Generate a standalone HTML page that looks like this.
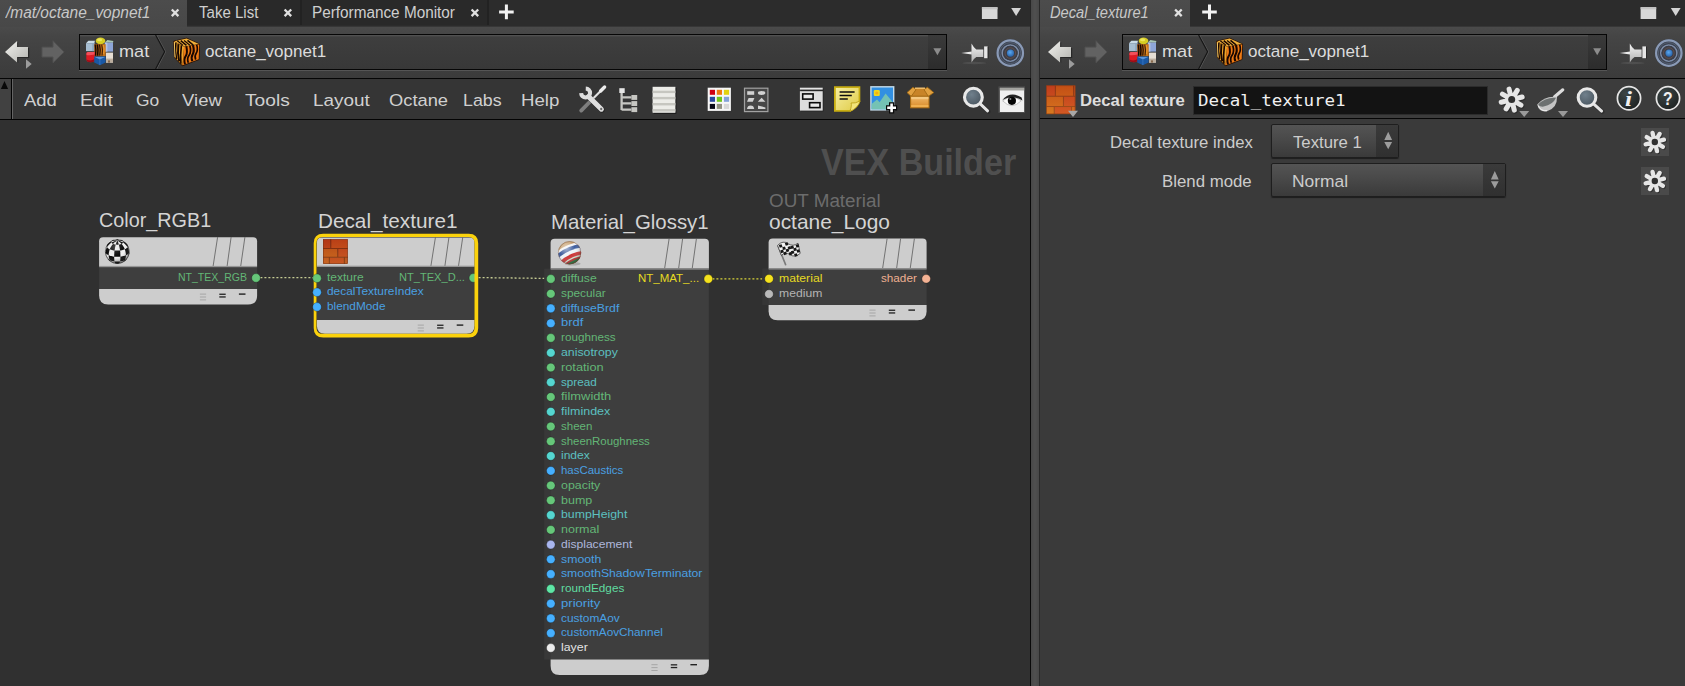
<!DOCTYPE html>
<html><head><meta charset="utf-8"><title>Houdini - VEX Builder</title>
<style>
html,body{margin:0;padding:0}
body{width:1685px;height:686px;overflow:hidden;position:relative;background:#303030;font-family:"Liberation Sans",sans-serif}
.a{position:absolute}
.t{position:absolute;white-space:pre;line-height:1;transform-origin:0 50%;font-family:"Liberation Sans",sans-serif}
svg{position:absolute;overflow:visible}
.tabbar{background:#2c2c2c;height:26px;top:0}
.tabon{background:linear-gradient(#4c4c4c,#484848);top:0;height:27px}
.taboff{background:#292929;top:0;height:25px;border-right:2px solid #222}
.toolbar{top:26px;height:52px;background:linear-gradient(#373737 0,#373737 1px,#4a4a4a 1px,#454545 20%,#3b3b3b 100%)}
.pathbox{top:34px;height:34px;border:1px solid #060606;background:linear-gradient(#565656 0,#3e3e3e 2px,#383838 100%);box-shadow:0 1px 0 #555}
.pathdd{top:35px;height:34px;width:18px;background:linear-gradient(#3a3a3a,#2c2c2c)}
.menubar{top:78px;height:40px;background:#353535;border-top:1px solid #050505;border-bottom:1px solid #030303;box-sizing:content-box}
.node-h{background:#cccccc}
.node-b{background:#3d3d3d}
.dot{position:absolute;width:8.6px;height:8.6px;border-radius:50%;margin:-4.3px 0 0 -4.3px}
.dd{border:1px solid #1e1e1e;border-radius:2px;background:linear-gradient(#545454,#494949 45%,#3a3a3a);box-shadow:0 1px 1px rgba(0,0,0,.5)}
.ddr{position:absolute;right:0;top:0;bottom:0;width:22px;background:linear-gradient(#3a3a3a,#303030)}

</style></head>
<body>
<!-- ============ LEFT PANE ============ -->
<div class="a toolbar" style="left:0;width:1030px"></div>
<div class="a tabbar" style="left:0;width:1030px"></div>
<div class="a tabon" style="left:0;width:187px"></div>
<div class="a taboff" style="left:187px;width:113px"></div>
<div class="a taboff" style="left:302px;width:185px"></div>
<div class="a pathbox" style="left:79px;width:866px"></div>
<div class="a pathdd" style="left:928px"></div>
<div class="a menubar" style="left:0;width:1030px"></div>
<div class="a" style="left:0;top:79px;width:11px;height:40px;background:#414141;border-right:1px solid #020202"></div>
<div class="a" style="left:12px;top:79px;width:1px;height:40px;background:#646464"></div>
<div class="a" style="left:1030px;top:0;width:1px;height:686px;background:#0a0a0a"></div>
<div class="a" style="left:1030px;top:0;width:1px;height:78px;background:#262626"></div>
<!-- divider -->
<div class="a" style="left:1031px;top:0;width:8px;height:686px;background:linear-gradient(90deg,#484848,#505050 50%,#484848)"></div>
<div class="a" style="left:1039px;top:0;width:1px;height:686px;background:#2a2a2a"></div>
<!-- ============ RIGHT PANE ============ -->
<div class="a" style="left:1040px;top:0;width:645px;height:686px;background:#3a3a3a"></div>
<div class="a toolbar" style="left:1040px;width:645px"></div>
<div class="a tabbar" style="left:1040px;width:645px"></div>
<div class="a tabon" style="left:1040px;width:150px"></div>
<div class="a pathbox" style="left:1122px;width:483px"></div>
<div class="a pathdd" style="left:1588px"></div>
<div class="a" style="left:1040px;top:78px;width:645px;height:1px;background:#050505"></div>
<div class="a" style="left:1040px;top:79px;width:645px;height:39px;background:#3c3c3c"></div>
<div class="a" style="left:1040px;top:118px;width:645px;height:1px;background:#050505"></div>
<div class="a" style="left:1193px;top:86px;width:293px;height:27px;background:#131313;border:1px solid #2c2c2c"></div>
<!-- dropdowns -->
<div class="a dd" style="left:1271px;top:124px;width:126px;height:32px"><div class="ddr"></div></div>
<div class="a dd" style="left:1271px;top:163px;width:233px;height:32px"><div class="ddr"></div></div>
<div class="a" style="left:1641px;top:128px;width:28px;height:28px;background:#4a4a4a"></div>
<div class="a" style="left:1641px;top:167px;width:28px;height:28px;background:#4a4a4a"></div>

<svg width="1685" height="686" viewBox="0 0 1685 686" style="left:0;top:0">
<line x1="260.4" y1="277.6" x2="313.4" y2="277.6" stroke="#c6cc94" stroke-width="1.3" stroke-dasharray="2 2"/>
<line x1="478.6" y1="277.6" x2="547" y2="278.4" stroke="#c6cc94" stroke-width="1.3" stroke-dasharray="2 2"/>
<line x1="712.4" y1="278.9" x2="765" y2="278.9" stroke="#d6d23a" stroke-width="1.3" stroke-dasharray="2 2"/>
<path d="M99.1,266.2 V241.2 Q99.1,237.2 103.1,237.2 H253.10000000000002 Q257.1,237.2 257.1,241.2 V266.2 Z" fill="#cdcdcd"/>
<line x1="217.6" y1="237.2" x2="213.1" y2="266.2" stroke="#4a4a4a" stroke-width="0.7"/>
<line x1="231.1" y1="237.2" x2="227.1" y2="266.2" stroke="#4a4a4a" stroke-width="0.7"/>
<line x1="244.9" y1="237.2" x2="240.7" y2="266.2" stroke="#4a4a4a" stroke-width="0.7"/>
<rect x="99.1" y="266.2" width="158" height="22.8" fill="#3e3e3e"/>
<rect x="99.1" y="265.9" width="158" height="1.3" fill="#969696"/>
<path d="M99.1,289.0 H257.1 V295.6 Q257.1,304.6 248.10000000000002,304.6 H108.1 Q99.1,304.6 99.1,295.6 Z" fill="#cdcdcd"/>
<rect x="199.9" y="293.6" width="6.2" height="1" fill="#a6a6a6"/>
<rect x="199.9" y="296.5" width="6.2" height="1" fill="#a6a6a6"/>
<rect x="199.9" y="299.4" width="6.2" height="1" fill="#a6a6a6"/>
<rect x="219.3" y="293.6" width="6.4" height="1.3" fill="#222"/>
<rect x="219.3" y="296.3" width="6.4" height="1.3" fill="#222"/>
<rect x="238.9" y="293.4" width="6.6" height="1.4" fill="#222"/>
<rect x="315" y="235" width="161" height="100.5" rx="7" ry="7" fill="#2a2a2a"/>
<path d="M316.9,266.0 V242.6 Q316.9,237.6 321.9,237.6 H469.5 Q474.5,237.6 474.5,242.6 V266.0 Z" fill="#cdcdcd"/>
<line x1="435.4" y1="237.6" x2="430.9" y2="266.0" stroke="#4a4a4a" stroke-width="0.7"/>
<line x1="448.9" y1="237.6" x2="444.9" y2="266.0" stroke="#4a4a4a" stroke-width="0.7"/>
<line x1="462.7" y1="237.6" x2="458.5" y2="266.0" stroke="#4a4a4a" stroke-width="0.7"/>
<rect x="316.9" y="266.0" width="157.6" height="54.0" fill="#3e3e3e"/>
<rect x="316.9" y="265.7" width="157.6" height="1.3" fill="#969696"/>
<path d="M316.9,320.0 H474.5 V325.8 Q474.5,333.8 466.5,333.8 H324.9 Q316.9,333.8 316.9,325.8 Z" fill="#cdcdcd"/>
<rect x="417.7" y="324.6" width="6.2" height="1" fill="#a6a6a6"/>
<rect x="417.7" y="327.5" width="6.2" height="1" fill="#a6a6a6"/>
<rect x="417.7" y="330.4" width="6.2" height="1" fill="#a6a6a6"/>
<rect x="437.1" y="324.6" width="6.4" height="1.3" fill="#222"/>
<rect x="437.1" y="327.3" width="6.4" height="1.3" fill="#222"/>
<rect x="456.7" y="324.4" width="6.6" height="1.4" fill="#222"/>
<rect x="544.2" y="268.6" width="7" height="391" fill="#383838"/>
<path d="M550.6,268.6 V242.8 Q550.6,238.8 554.6,238.8 H704.9000000000001 Q708.9000000000001,238.8 708.9000000000001,242.8 V268.6 Z" fill="#cdcdcd"/>
<line x1="669.1" y1="238.8" x2="664.6" y2="268.6" stroke="#4a4a4a" stroke-width="0.7"/>
<line x1="682.6" y1="238.8" x2="678.6" y2="268.6" stroke="#4a4a4a" stroke-width="0.7"/>
<line x1="696.4" y1="238.8" x2="692.2" y2="268.6" stroke="#4a4a4a" stroke-width="0.7"/>
<rect x="550.6" y="268.6" width="158.3" height="391.0" fill="#3e3e3e"/>
<rect x="550.6" y="268.3" width="158.3" height="1.3" fill="#969696"/>
<path d="M550.6,659.6 H708.9000000000001 V666.1 Q708.9000000000001,675.1 699.9000000000001,675.1 H559.6 Q550.6,675.1 550.6,666.1 Z" fill="#cdcdcd"/>
<rect x="651.4" y="664.2" width="6.2" height="1" fill="#a6a6a6"/>
<rect x="651.4" y="667.1" width="6.2" height="1" fill="#a6a6a6"/>
<rect x="651.4" y="670.0" width="6.2" height="1" fill="#a6a6a6"/>
<rect x="670.8" y="664.2" width="6.4" height="1.3" fill="#222"/>
<rect x="670.8" y="666.9" width="6.4" height="1.3" fill="#222"/>
<rect x="690.4" y="664.0" width="6.6" height="1.4" fill="#222"/>
<rect x="762.2" y="268.5" width="7" height="36.5" fill="#363636"/>
<path d="M768.6,268.5 V242.6 Q768.6,238.6 772.6,238.6 H922.6 Q926.6,238.6 926.6,242.6 V268.5 Z" fill="#cdcdcd"/>
<line x1="887.1" y1="238.6" x2="882.6" y2="268.5" stroke="#4a4a4a" stroke-width="0.7"/>
<line x1="900.6" y1="238.6" x2="896.6" y2="268.5" stroke="#4a4a4a" stroke-width="0.7"/>
<line x1="914.4" y1="238.6" x2="910.2" y2="268.5" stroke="#4a4a4a" stroke-width="0.7"/>
<rect x="768.6" y="268.5" width="158" height="36.5" fill="#3e3e3e"/>
<rect x="768.6" y="268.2" width="158" height="1.3" fill="#969696"/>
<path d="M768.6,305.0 H926.6 V311.3 Q926.6,320.3 917.6,320.3 H777.6 Q768.6,320.3 768.6,311.3 Z" fill="#cdcdcd"/>
<rect x="869.4" y="309.6" width="6.2" height="1" fill="#a6a6a6"/>
<rect x="869.4" y="312.5" width="6.2" height="1" fill="#a6a6a6"/>
<rect x="869.4" y="315.4" width="6.2" height="1" fill="#a6a6a6"/>
<rect x="888.8" y="309.6" width="6.4" height="1.3" fill="#222"/>
<rect x="888.8" y="312.3" width="6.4" height="1.3" fill="#222"/>
<rect x="908.4" y="309.4" width="6.6" height="1.4" fill="#222"/>
<circle cx="256.0" cy="277.9" r="4.3" fill="#66c77a" stroke="#000" stroke-opacity="0.28" stroke-width="0.9"/>
<circle cx="473.4" cy="277.9" r="4.3" fill="#66c77a" stroke="#000" stroke-opacity="0.28" stroke-width="0.9"/>
<path fill-rule="evenodd" fill="#fbd20c" d="M323.2,233.7 H468.7 Q478.2,233.7 478.2,243.2 V327.9 Q478.2,337.4 468.7,337.4 H323.2 Q313.7,337.4 313.7,327.9 V243.2 Q313.7,233.7 323.2,233.7Z M322.5,236.9 H468.5 Q474.5,236.9 474.5,242.9 V327.8 Q474.5,333.8 468.5,333.8 H322.5 Q316.5,333.8 316.5,327.8 V242.9 Q316.5,236.9 322.5,236.9Z"/>
<circle cx="317.0" cy="278.2" r="4.3" fill="#66c77a" stroke="#000" stroke-opacity="0.28" stroke-width="0.9"/>
<circle cx="317.0" cy="292.2" r="4.3" fill="#46b0ff" stroke="#000" stroke-opacity="0.28" stroke-width="0.9"/>
<circle cx="317.0" cy="306.9" r="4.3" fill="#46b0ff" stroke="#000" stroke-opacity="0.28" stroke-width="0.9"/>
<circle cx="550.8" cy="278.9" r="4.3" fill="#66c77a" stroke="#000" stroke-opacity="0.28" stroke-width="0.9"/>
<circle cx="550.8" cy="293.7" r="4.3" fill="#66c77a" stroke="#000" stroke-opacity="0.28" stroke-width="0.9"/>
<circle cx="550.8" cy="308.4" r="4.3" fill="#46b0ff" stroke="#000" stroke-opacity="0.28" stroke-width="0.9"/>
<circle cx="550.8" cy="323.2" r="4.3" fill="#46b0ff" stroke="#000" stroke-opacity="0.28" stroke-width="0.9"/>
<circle cx="550.8" cy="337.9" r="4.3" fill="#66c77a" stroke="#000" stroke-opacity="0.28" stroke-width="0.9"/>
<circle cx="550.8" cy="352.7" r="4.3" fill="#55d6d0" stroke="#000" stroke-opacity="0.28" stroke-width="0.9"/>
<circle cx="550.8" cy="367.5" r="4.3" fill="#66c77a" stroke="#000" stroke-opacity="0.28" stroke-width="0.9"/>
<circle cx="550.8" cy="382.2" r="4.3" fill="#55d6d0" stroke="#000" stroke-opacity="0.28" stroke-width="0.9"/>
<circle cx="550.8" cy="397.0" r="4.3" fill="#66c77a" stroke="#000" stroke-opacity="0.28" stroke-width="0.9"/>
<circle cx="550.8" cy="411.7" r="4.3" fill="#55d6d0" stroke="#000" stroke-opacity="0.28" stroke-width="0.9"/>
<circle cx="550.8" cy="426.5" r="4.3" fill="#66c77a" stroke="#000" stroke-opacity="0.28" stroke-width="0.9"/>
<circle cx="550.8" cy="441.3" r="4.3" fill="#66c77a" stroke="#000" stroke-opacity="0.28" stroke-width="0.9"/>
<circle cx="550.8" cy="456.0" r="4.3" fill="#55d6d0" stroke="#000" stroke-opacity="0.28" stroke-width="0.9"/>
<circle cx="550.8" cy="470.8" r="4.3" fill="#46b0ff" stroke="#000" stroke-opacity="0.28" stroke-width="0.9"/>
<circle cx="550.8" cy="485.5" r="4.3" fill="#66c77a" stroke="#000" stroke-opacity="0.28" stroke-width="0.9"/>
<circle cx="550.8" cy="500.3" r="4.3" fill="#66c77a" stroke="#000" stroke-opacity="0.28" stroke-width="0.9"/>
<circle cx="550.8" cy="515.1" r="4.3" fill="#55d6d0" stroke="#000" stroke-opacity="0.28" stroke-width="0.9"/>
<circle cx="550.8" cy="529.8" r="4.3" fill="#66c77a" stroke="#000" stroke-opacity="0.28" stroke-width="0.9"/>
<circle cx="550.8" cy="544.6" r="4.3" fill="#a9b6ee" stroke="#000" stroke-opacity="0.28" stroke-width="0.9"/>
<circle cx="550.8" cy="559.3" r="4.3" fill="#46b0ff" stroke="#000" stroke-opacity="0.28" stroke-width="0.9"/>
<circle cx="550.8" cy="574.1" r="4.3" fill="#46b0ff" stroke="#000" stroke-opacity="0.28" stroke-width="0.9"/>
<circle cx="550.8" cy="588.9" r="4.3" fill="#5fe6a6" stroke="#000" stroke-opacity="0.28" stroke-width="0.9"/>
<circle cx="550.8" cy="603.6" r="4.3" fill="#46b0ff" stroke="#000" stroke-opacity="0.28" stroke-width="0.9"/>
<circle cx="550.8" cy="618.4" r="4.3" fill="#46b0ff" stroke="#000" stroke-opacity="0.28" stroke-width="0.9"/>
<circle cx="550.8" cy="633.1" r="4.3" fill="#46b0ff" stroke="#000" stroke-opacity="0.28" stroke-width="0.9"/>
<circle cx="550.8" cy="647.9" r="4.3" fill="#ececec" stroke="#000" stroke-opacity="0.28" stroke-width="0.9"/>
<circle cx="708.3" cy="278.9" r="4.3" fill="#f5e21e" stroke="#000" stroke-opacity="0.28" stroke-width="0.9"/>
<circle cx="769.0" cy="278.8" r="4.3" fill="#f5e21e" stroke="#000" stroke-opacity="0.28" stroke-width="0.9"/>
<circle cx="769.0" cy="294.0" r="4.3" fill="#b9b9b9" stroke="#000" stroke-opacity="0.28" stroke-width="0.9"/>
<circle cx="926.2" cy="278.8" r="4.3" fill="#f4b294" stroke="#000" stroke-opacity="0.28" stroke-width="0.9"/>
</svg>
<svg width="1685" height="686" viewBox="0 0 1685 686" style="left:0;top:0">
<defs>
<linearGradient id="gArrow" x1="0" y1="0" x2="1" y2="1"><stop offset="0" stop-color="#f2f2ee"/><stop offset="1" stop-color="#b4b4b0"/></linearGradient>
<linearGradient id="gPin" x1="0" y1="0" x2="0" y2="1"><stop offset="0" stop-color="#f4f4f4"/><stop offset="1" stop-color="#b0b0b0"/></linearGradient>
<radialGradient id="gBlue" cx="0.45" cy="0.4" r="0.6"><stop offset="0" stop-color="#5aa8f0"/><stop offset="1" stop-color="#2a62a8"/></radialGradient>
<radialGradient id="gLens" cx="0.4" cy="0.35" r="0.7"><stop offset="0" stop-color="#70808c"/><stop offset="1" stop-color="#48545e"/></radialGradient>
<radialGradient id="gInfo" cx="0.35" cy="0.3" r="0.8"><stop offset="0" stop-color="#3c4646"/><stop offset="1" stop-color="#1c2020"/></radialGradient>
<radialGradient id="gBall" cx="0.38" cy="0.3" r="0.75"><stop offset="0" stop-color="#ffffff"/><stop offset="0.6" stop-color="#d8d8d8"/><stop offset="1" stop-color="#8a8a8a"/></radialGradient>
<linearGradient id="gBrick" x1="0" y1="0" x2="0" y2="1"><stop offset="0" stop-color="#c85a20"/><stop offset="1" stop-color="#d86a1c"/></linearGradient>
<linearGradient id="gBox" x1="0" y1="0" x2="0" y2="1"><stop offset="0" stop-color="#f0b868"/><stop offset="1" stop-color="#d88a28"/></linearGradient>
<linearGradient id="gNote" x1="0" y1="0" x2="1" y2="1"><stop offset="0" stop-color="#f6eea0"/><stop offset="1" stop-color="#e0cc48"/></linearGradient>
<linearGradient id="gBrickOv" x1="0" y1="0" x2="0" y2="1"><stop offset="0" stop-color="#a01818" stop-opacity="0.22"/><stop offset="1" stop-color="#ffb040" stop-opacity="0.22"/></linearGradient>
<clipPath id="cBall"><circle cx="0" cy="0" r="12"/></clipPath>
<clipPath id="cBall2"><circle cx="0" cy="0" r="11.5"/></clipPath>
<radialGradient id="gShade" cx="0.36" cy="0.3" r="0.8"><stop offset="0" stop-color="#ffffff" stop-opacity="0.55"/><stop offset="0.45" stop-color="#ffffff" stop-opacity="0"/><stop offset="1" stop-color="#000000" stop-opacity="0.45"/></radialGradient><radialGradient id="gShade2" cx="0.4" cy="0.32" r="0.75"><stop offset="0" stop-color="#ffffff" stop-opacity="0.25"/><stop offset="0.55" stop-color="#808080" stop-opacity="0"/><stop offset="1" stop-color="#000000" stop-opacity="0.6"/></radialGradient></defs>
<path d="M6.2,53.1 L18.2,42 V48.1 H29.2 V57.9 H18.2 V63 Z" fill="#222" opacity="0.8"/><path d="M5,52.1 L17.1,41 V47.1 H28 V56.9 H17.1 V62.4 Z" fill="url(#gArrow)"/><path d="M26,59.2 L31.7,64 L26,68.8 Z" fill="#9c9c9c"/>
<path d="M64.1,52 L53,40.7 V47.1 H42 V57 H53 V62.8 Z" fill="#626262" stroke="#505050" stroke-width="1"/>
<path d="M86,43.2 L88.4,40.8 H94.9 L94.4,43.2 Z" fill="#c8dae6"/><rect x="86" y="43.2" width="8.4" height="7.9" fill="#a6bed2"/><rect x="92.2" y="43.2" width="2.2" height="7.9" fill="#8ea8c0"/><ellipse cx="100.5" cy="40.9" rx="4.8" ry="3.4" fill="#d6cc22"/><ellipse cx="99.6" cy="39.8" rx="2.6" ry="1.5" fill="#ece65a"/><path d="M104.8,42.6 L107.4,40 L113.4,41 L112.9,42.8 Z" fill="#a8c6b4"/><rect x="104.8" y="42.6" width="8.2" height="9" fill="#8ea6d8"/><rect x="104.8" y="42.6" width="2.6" height="9" fill="#b4c4e4"/><rect x="94.5" y="44.2" width="11.2" height="11.8" fill="#c8741a"/><rect x="94.5" y="44.2" width="5" height="11.8" fill="#8a4a12"/><path d="M95.2,44.6 q1.2,5.5 0.2,11" stroke="#180800" stroke-width="1.2" fill="none"/><path d="M97.3,44.6 q1.2,5.5 0.2,11" stroke="#180800" stroke-width="1.3" fill="none"/><path d="M99.6,44.6 q1.2,5.5 0.2,11" stroke="#180800" stroke-width="1.1" fill="none"/><path d="M101.8,44.6 q1.2,5.5 0.2,11" stroke="#180800" stroke-width="0.9" fill="none"/><path d="M103.2,45 q1.6,4 0.4,9" stroke="#e89830" stroke-width="1.2" fill="none"/><path d="M86.3,53.4 Q86.3,51.9 88,51.9 H94.7 V61 Q91,63.4 87.4,61.6 Q86.3,60.6 86.3,59 Z" fill="#dc1a24"/><path d="M86.5,53.6 Q86.5,52.1 88,52.1 H94.5 V54.4 Q90,55.6 86.5,55 Z" fill="#f2505a"/><path d="M86.6,59.4 Q90.5,61.6 94.7,59 V61 Q91,63.4 87.4,61.6 Z" fill="#9a0e18"/><path d="M94.2,56.8 H105.6 V62.6 L99.9,65.2 L94.2,62.6 Z" fill="#1a58a4"/><path d="M94.2,56.8 H105.6 L99.9,59.6 Z" fill="#5a96dc"/><path d="M99.9,59.6 V65" stroke="#3a78c4" stroke-width="0.8"/><rect x="106" y="52.6" width="7" height="10" fill="#e6ded4"/><rect x="106" y="58.6" width="7" height="4" fill="#bcae9e"/><rect x="108.2" y="60.4" width="1.6" height="2.2" fill="#7a5a3a"/>
<path d="M156.6,35 L165.6,51.8 L156.6,69" fill="none" stroke="#5a5a5a" stroke-width="1"/><path d="M155.6,35 L164.6,51.8 L155.6,69" fill="none" stroke="#161616" stroke-width="1.2"/>
<path d="M173.6,41.2 L186.7,38.2 L199.5,44.1 L199,59.5 L182.4,65.8 L174.5,57.6 Z" fill="#2a1204" stroke="#2a1204" stroke-width="0.9" stroke-linejoin="round"/><path d="M173.9,41.6 L184.1,46.7 L182.5,65.3 L174.8,57.4 Z" fill="#eca42a"/><path d="M184.1,46.7 L199.2,44.4 L198.7,59.3 L182.5,65.3 Z" fill="#ee7a14"/><path d="M174.2,41.3 L186.7,38.5 L199,44.1 L184.1,46.4 Z" fill="#f0b03a"/><path d="M186.3,46.3 Q187.9,53.2 185.7,56.2 T185.0,64.2" stroke="#180600" stroke-width="2.0" fill="none"/><path d="M189.9,45.8 Q191.5,52.2 189.1,55.2 T188.3,62.7" stroke="#180600" stroke-width="1.7" fill="none"/><path d="M193.0,45.3 Q194.6,51.2 192.7,54.2 T192.4,61.2" stroke="#180600" stroke-width="2.1" fill="none"/><path d="M196.7,44.8 Q198.29999999999998,50.2 196.2,53.2 T195.7,59.7" stroke="#180600" stroke-width="1.6" fill="none"/><path d="M175.9,42.8 Q174.70000000000002,50.9 176.6,59.0" stroke="#180600" stroke-width="1.5" fill="none"/><path d="M178.4,44.1 Q177.20000000000002,52.8 179.2,61.4" stroke="#180600" stroke-width="1.9" fill="none"/><path d="M181.4,45.4 Q180.20000000000002,54.6 180.9,63.8" stroke="#180600" stroke-width="1.6" fill="none"/><path d="M177.3,40.7 l5.8,4.7" stroke="#180600" stroke-width="1.2"/><path d="M180.70000000000002,40.6 l5.8,4.7" stroke="#180600" stroke-width="1.5"/><path d="M184.10000000000002,40.5 l5.8,4.7" stroke="#180600" stroke-width="1.2"/><path d="M187.5,40.4 l5.8,4.7" stroke="#180600" stroke-width="1.5"/><path d="M174.3,42.2 L175,57" stroke="#f6d070" stroke-width="0.9" opacity="0.9"/>
<path d="M1049.2,53.1 L1061.2,42 V48.1 H1072.2 V57.9 H1061.2 V63 Z" fill="#222" opacity="0.8"/><path d="M1048,52.1 L1060.1,41 V47.1 H1071 V56.9 H1060.1 V62.4 Z" fill="url(#gArrow)"/><path d="M1069,59.2 L1074.7,64 L1069,68.8 Z" fill="#9c9c9c"/>
<path d="M1107.1,52 L1096,40.7 V47.1 H1085 V57 H1096 V62.8 Z" fill="#626262" stroke="#505050" stroke-width="1"/>
<path d="M1129,43.2 L1131.4,40.8 H1137.9 L1137.4,43.2 Z" fill="#c8dae6"/><rect x="1129" y="43.2" width="8.4" height="7.9" fill="#a6bed2"/><rect x="1135.2" y="43.2" width="2.2" height="7.9" fill="#8ea8c0"/><ellipse cx="1143.5" cy="40.9" rx="4.8" ry="3.4" fill="#d6cc22"/><ellipse cx="1142.6" cy="39.8" rx="2.6" ry="1.5" fill="#ece65a"/><path d="M1147.8,42.6 L1150.4,40 L1156.4,41 L1155.9,42.8 Z" fill="#a8c6b4"/><rect x="1147.8" y="42.6" width="8.2" height="9" fill="#8ea6d8"/><rect x="1147.8" y="42.6" width="2.6" height="9" fill="#b4c4e4"/><rect x="1137.5" y="44.2" width="11.2" height="11.8" fill="#c8741a"/><rect x="1137.5" y="44.2" width="5" height="11.8" fill="#8a4a12"/><path d="M1138.2,44.6 q1.2,5.5 0.2,11" stroke="#180800" stroke-width="1.2" fill="none"/><path d="M1140.3,44.6 q1.2,5.5 0.2,11" stroke="#180800" stroke-width="1.3" fill="none"/><path d="M1142.6,44.6 q1.2,5.5 0.2,11" stroke="#180800" stroke-width="1.1" fill="none"/><path d="M1144.8,44.6 q1.2,5.5 0.2,11" stroke="#180800" stroke-width="0.9" fill="none"/><path d="M1146.2,45 q1.6,4 0.4,9" stroke="#e89830" stroke-width="1.2" fill="none"/><path d="M1129.3,53.4 Q1129.3,51.9 1131,51.9 H1137.7 V61 Q1134,63.4 1130.4,61.6 Q1129.3,60.6 1129.3,59 Z" fill="#dc1a24"/><path d="M1129.5,53.6 Q1129.5,52.1 1131,52.1 H1137.5 V54.4 Q1133,55.6 1129.5,55 Z" fill="#f2505a"/><path d="M1129.6,59.4 Q1133.5,61.6 1137.7,59 V61 Q1134,63.4 1130.4,61.6 Z" fill="#9a0e18"/><path d="M1137.2,56.8 H1148.6 V62.6 L1142.9,65.2 L1137.2,62.6 Z" fill="#1a58a4"/><path d="M1137.2,56.8 H1148.6 L1142.9,59.6 Z" fill="#5a96dc"/><path d="M1142.9,59.6 V65" stroke="#3a78c4" stroke-width="0.8"/><rect x="1149" y="52.6" width="7" height="10" fill="#e6ded4"/><rect x="1149" y="58.6" width="7" height="4" fill="#bcae9e"/><rect x="1151.2" y="60.4" width="1.6" height="2.2" fill="#7a5a3a"/>
<path d="M1199.6,35 L1208.6,51.8 L1199.6,69" fill="none" stroke="#5a5a5a" stroke-width="1"/><path d="M1198.6,35 L1207.6,51.8 L1198.6,69" fill="none" stroke="#161616" stroke-width="1.2"/>
<path d="M1216.6,41.2 L1229.7,38.2 L1242.5,44.1 L1242,59.5 L1225.4,65.8 L1217.5,57.6 Z" fill="#2a1204" stroke="#2a1204" stroke-width="0.9" stroke-linejoin="round"/><path d="M1216.9,41.6 L1227.1,46.7 L1225.5,65.3 L1217.8,57.4 Z" fill="#eca42a"/><path d="M1227.1,46.7 L1242.2,44.4 L1241.7,59.3 L1225.5,65.3 Z" fill="#ee7a14"/><path d="M1217.2,41.3 L1229.7,38.5 L1242,44.1 L1227.1,46.4 Z" fill="#f0b03a"/><path d="M1229.3,46.3 Q1230.8999999999999,53.2 1228.7,56.2 T1228.0,64.2" stroke="#180600" stroke-width="2.0" fill="none"/><path d="M1232.9,45.8 Q1234.5,52.2 1232.1,55.2 T1231.3,62.7" stroke="#180600" stroke-width="1.7" fill="none"/><path d="M1236.0,45.3 Q1237.6,51.2 1235.7,54.2 T1235.4,61.2" stroke="#180600" stroke-width="2.1" fill="none"/><path d="M1239.7,44.8 Q1241.3,50.2 1239.2,53.2 T1238.7,59.7" stroke="#180600" stroke-width="1.6" fill="none"/><path d="M1218.9,42.8 Q1217.7,50.9 1219.6,59.0" stroke="#180600" stroke-width="1.5" fill="none"/><path d="M1221.4,44.1 Q1220.2,52.8 1222.2,61.4" stroke="#180600" stroke-width="1.9" fill="none"/><path d="M1224.4,45.4 Q1223.2,54.6 1223.9,63.8" stroke="#180600" stroke-width="1.6" fill="none"/><path d="M1220.3,40.7 l5.8,4.7" stroke="#180600" stroke-width="1.2"/><path d="M1223.7,40.6 l5.8,4.7" stroke="#180600" stroke-width="1.5"/><path d="M1227.1,40.5 l5.8,4.7" stroke="#180600" stroke-width="1.2"/><path d="M1230.5,40.4 l5.8,4.7" stroke="#180600" stroke-width="1.5"/><path d="M1217.3,42.2 L1218,57" stroke="#f6d070" stroke-width="0.9" opacity="0.9"/>
<path d="M171.79999999999998,9.5 L178.4,16.1 M178.4,9.5 L171.79999999999998,16.1" stroke="#e0e0e0" stroke-width="2.3" fill="none"/>
<path d="M284.59999999999997,9.5 L291.2,16.1 M291.2,9.5 L284.59999999999997,16.1" stroke="#e0e0e0" stroke-width="2.3" fill="none"/>
<path d="M471.59999999999997,9.5 L478.2,16.1 M478.2,9.5 L471.59999999999997,16.1" stroke="#e0e0e0" stroke-width="2.3" fill="none"/>
<path d="M499.09999999999997,11.9 H513.6999999999999 M506.4,4.6000000000000005 V19.2" stroke="#f2f2f2" stroke-width="3" fill="none"/>
<rect x="981.9" y="7.2" width="15.6" height="11.8" fill="#d8d8d8"/><rect x="981.9" y="7.2" width="15.6" height="2" fill="#c4c4c4"/><path d="M1011.2,8.1 h9.8 l-4.9,7.8z" fill="#d4d4d4"/>
<path d="M933.4,48.2 h8 l-4,7z" fill="#8c8c8c"/>
<ellipse cx="974.3" cy="63" rx="12" ry="1.2" fill="#5a5a5a" opacity="0.6"/><path d="M961.3,53.1 L971.8,51.6 V54.6 Z" fill="#ececec"/><path d="M971.5,43.6 Q973.8,48 976.3,49.6 H983.3 V57 H976.3 Q973.8,58.5 971.5,62.4 Z" fill="url(#gPin)"/><rect x="984.0999999999999" y="46.4" width="3.6" height="11.8" fill="#e6e6e6"/><rect x="987.6999999999999" y="46.8" width="1" height="11.8" fill="#2a2a2a"/>
<circle cx="1010.3" cy="53.1" r="14" fill="#3c424e"/><circle cx="1010.3" cy="53.1" r="12.7" fill="none" stroke="#8a9ab6" stroke-width="2.2"/><circle cx="1010.3" cy="53.1" r="10.5" fill="none" stroke="#566278" stroke-width="0.9"/><circle cx="1010.3" cy="53.1" r="8.1" fill="none" stroke="#7c8ca8" stroke-width="1.5"/><circle cx="1010.3" cy="53.1" r="7.3" fill="#3c3e48"/><circle cx="1010.3" cy="53.1" r="5.3" fill="none" stroke="#64504c" stroke-width="0.9"/><circle cx="1010.5" cy="53.1" r="3.6" fill="url(#gBlue)"/>
<path d="M1175.1000000000001,9.5 L1181.7,16.1 M1181.7,9.5 L1175.1000000000001,16.1" stroke="#e0e0e0" stroke-width="2.3" fill="none"/>
<path d="M1202.2,11.9 H1216.8 M1209.5,4.6000000000000005 V19.2" stroke="#f2f2f2" stroke-width="3" fill="none"/>
<rect x="1640.6" y="7.2" width="15.6" height="11.8" fill="#d8d8d8"/><rect x="1640.6" y="7.2" width="15.6" height="2" fill="#c4c4c4"/><path d="M1670.8,8.1 h9.8 l-4.9,7.8z" fill="#d4d4d4"/>
<path d="M1593.2,48.2 h8 l-4,7z" fill="#8c8c8c"/>
<ellipse cx="1632.6" cy="63" rx="12" ry="1.2" fill="#5a5a5a" opacity="0.6"/><path d="M1619.6,53.1 L1630.1,51.6 V54.6 Z" fill="#ececec"/><path d="M1629.8,43.6 Q1632.1,48 1634.6,49.6 H1641.6 V57 H1634.6 Q1632.1,58.5 1629.8,62.4 Z" fill="url(#gPin)"/><rect x="1642.3999999999999" y="46.4" width="3.6" height="11.8" fill="#e6e6e6"/><rect x="1646.0" y="46.8" width="1" height="11.8" fill="#2a2a2a"/>
<circle cx="1668.8" cy="53.1" r="14" fill="#3c424e"/><circle cx="1668.8" cy="53.1" r="12.7" fill="none" stroke="#8a9ab6" stroke-width="2.2"/><circle cx="1668.8" cy="53.1" r="10.5" fill="none" stroke="#566278" stroke-width="0.9"/><circle cx="1668.8" cy="53.1" r="8.1" fill="none" stroke="#7c8ca8" stroke-width="1.5"/><circle cx="1668.8" cy="53.1" r="7.3" fill="#3c3e48"/><circle cx="1668.8" cy="53.1" r="5.3" fill="none" stroke="#64504c" stroke-width="0.9"/><circle cx="1669.0" cy="53.1" r="3.6" fill="url(#gBlue)"/>
<path d="M581.2,110.6 L591.6,100" stroke="#7e7e7e" stroke-width="3.8" stroke-linecap="round"/><path d="M591.6,100 L602.4,89.2" stroke="#e2e2e2" stroke-width="2.1" stroke-linecap="butt"/><path d="M600.6,91 L604.6,87" stroke="#ececec" stroke-width="3.4" stroke-linecap="round"/><path d="M588.6,96.6 L601.4,109.2" stroke="#1c1c1c" stroke-width="5.6" stroke-linecap="round" opacity="0.5" transform="translate(0.6,0.8)"/><path d="M588.6,96.6 L601.4,109.2" stroke="#dedede" stroke-width="5" stroke-linecap="round"/><circle cx="601.2" cy="109" r="1.15" fill="#6a6a6a"/><path d="M585.76,88.50 A4.5 4.5 0 1 1 581.10,93.16" fill="none" stroke="#dedede" stroke-width="4"/>
<rect x="619.3" y="88.2" width="5.4" height="4.8" fill="#e6e6e6"/><path d="M621.6,93 V110 M621.6,97.3 H631.4 M621.6,103.4 H631.4 M621.6,109.6 H631.4" stroke="#c6c6c2" stroke-width="2.3" fill="none"/><rect x="631.4" y="95" width="5.8" height="4.9" fill="#c6c6c2"/><rect x="631.4" y="101.1" width="5.8" height="4.9" fill="#c6c6c2"/><rect x="631.4" y="107.2" width="5.8" height="4.9" fill="#c6c6c2"/>
<rect x="653.6" y="87.8" width="22.8" height="26" fill="#1a1a1a"/><rect x="652.6" y="86.8" width="22.8" height="26" fill="#ecece8"/><rect x="652.6" y="90.7" width="22.8" height="2.4" fill="#c6c6c0"/><rect x="652.6" y="96.9" width="22.8" height="2.4" fill="#c6c6c0"/><rect x="652.6" y="103" width="22.8" height="2.4" fill="#c6c6c0"/><rect x="652.6" y="109.1" width="22.8" height="2.4" fill="#c6c6c0"/>
<rect x="707.7" y="87.7" width="23.2" height="23.2" fill="#f6f6f6"/><rect x="709.8" y="89.8" width="5.2" height="5" fill="#d00012"/><rect x="716.8" y="89.8" width="5.2" height="5" fill="#f07a10"/><rect x="723.9" y="89.8" width="5.2" height="5" fill="#e2d210"/><rect x="709.8" y="96.8" width="5.2" height="5" fill="#2a4aa0"/><rect x="716.8" y="96.8" width="5.2" height="5" fill="#70c81a"/><rect x="723.9" y="96.8" width="5.2" height="5" fill="#82a2da"/><rect x="709.8" y="103.9" width="5.2" height="5" fill="#080816"/><rect x="716.8" y="103.9" width="5.2" height="5" fill="#929282"/><rect x="723.9" y="103.9" width="5.2" height="5" fill="#d8d8d8"/>
<rect x="744.5" y="88.2" width="23.4" height="23.4" fill="#474747" stroke="#a2a2a2" stroke-width="1.2"/><rect x="747.2" y="91.2" width="7" height="3.6" fill="#d2d2d2"/><ellipse cx="761.6" cy="93" rx="3.7" ry="1.9" fill="#d2d2d2"/><path d="M748.6,98.1 h5.8 l-1.6,3.6 h-5.8z" fill="#d2d2d2"/><path d="M761.6,97.8 l3.8,3.9 h-7.6z" fill="#d2d2d2"/><path d="M747,109 q0.4,-3.4 3.6,-3.4 q3.2,0 3.6,3.4z" fill="#d2d2d2"/><path d="M758,105.4 l7.4,2 v1.6 h-7.4z" fill="#d2d2d2"/>
<rect x="800.9" y="88.7" width="22.8" height="22.8" fill="#222" opacity="0.7"/><rect x="799.9" y="87.7" width="22.8" height="1.9" fill="#e4e4e4"/><rect x="799.9" y="91.2" width="22.8" height="19.4" fill="#dedede"/><rect x="802.7" y="93.9" width="10.4" height="5.2" fill="#e8e8e8" stroke="#0a0a0a" stroke-width="1.6"/><rect x="809.6" y="102.7" width="10.4" height="4.9" fill="#e8e8e8" stroke="#0a0a0a" stroke-width="1.6"/>
<path d="M834,86.2 H860.3 V101 Q858,108 850,111.7 H834 Z" fill="#c8ae12"/><path d="M835.8,88 H858.6 V100.6 Q856.5,106.5 849.4,110 H835.8 Z" fill="url(#gNote)"/><path d="M850,111.5 Q852,105 851,103 Q855,103.6 860.2,101 Q858,108 850,111.5Z" fill="#f2e47a" stroke="#b89c10" stroke-width="0.8"/><path d="M839.6,92.1 H854.6 M839.6,95.5 H851.8 M839.6,99.1 H847.8" stroke="#0c0c0c" stroke-width="1.5"/>
<rect x="870.2" y="86.1" width="24.2" height="24.5" fill="#c4dcec"/><rect x="871.6" y="87.5" width="21.4" height="21.7" fill="#3290e2"/><path d="M871.6,109.2 V104 L877,99.4 L879.6,102.2 L885.6,93.4 L893,102.6 V109.2 Z" fill="#74c2b4"/><rect x="873.8" y="90" width="6" height="6" rx="1.2" fill="#f0d818"/><circle cx="876.8" cy="93" r="1.6" fill="#f4b012"/><path d="M891.6,102.2 V113.4 M886,107.8 H897.2" stroke="#0a0a0a" stroke-width="5.2"/><path d="M891.6,103.4 V112.2 M887.2,107.8 H896" stroke="#ffffff" stroke-width="2.6"/>
<path d="M911.2,96.4 L914.6,88 H925.4 L928.3,96.4Z" fill="#c88428"/><path d="M911.2,96.4 L907,92.6 L913,87.2 L916,89.6 Z" fill="#e0a040" stroke="#9a6410" stroke-width="0.8"/><path d="M928.3,96.4 L933.8,92.6 L927.4,87.2 L924,89.6 Z" fill="#e0a040" stroke="#9a6410" stroke-width="0.8"/><path d="M915,88.2 H925" stroke="#f0c070" stroke-width="1.4"/><rect x="910.6" y="96.2" width="18.4" height="11.6" fill="url(#gBox)" stroke="#a86c14" stroke-width="1.1"/><rect x="911.2" y="97" width="17.2" height="2.2" fill="#f4c880"/><rect x="911.2" y="105" width="17.2" height="2.2" fill="#f0b050"/>
<path d="M980.0,103.60000000000001 L987.6,110.8" stroke="#222" stroke-width="4.2" stroke-linecap="round" opacity="0.5" transform="translate(0.8,0.8)"/><path d="M980.0,103.60000000000001 L987.6,110.8" stroke="#e4e4e4" stroke-width="3" stroke-linecap="round"/><circle cx="973.4" cy="97.2" r="8.9" fill="url(#gLens)" stroke="#e8e8e8" stroke-width="3.1"/>
<rect x="998.4" y="86.4" width="26.6" height="26.6" fill="#4c4c4c"/><rect x="999.9" y="87.9" width="24.2" height="24.1" fill="#f0f0f0"/><rect x="999.9" y="87.9" width="24.2" height="2.6" fill="#a4a4a0"/><path d="M1002.6,100.8 Q1012,93.6 1021.2,100.8 Q1012,110.6 1002.6,100.8Z" fill="#fbfbfb" stroke="#c4c4c4" stroke-width="1"/><path d="M1002.4,100 Q1010.5,90.6 1021.6,97.6 L1022.4,100.6 Q1012,94.2 1002.4,100Z" fill="#222"/><circle cx="1011.9" cy="100.8" r="4.1" fill="#050505"/><circle cx="1010.4" cy="99" r="1" fill="#8a8a8a"/>
<path d="M0.9,88.9 L4.5,80.9 L8.1,88.9Z" fill="#080808"/>
<rect x="1046.40" y="85.50" width="8.96" height="10.73" fill="#c8481c"/><rect x="1055.36" y="85.50" width="18.21" height="10.73" fill="#cc5e14"/><rect x="1073.57" y="85.50" width="1.73" height="10.73" fill="#c45418"/><rect x="1046.40" y="96.22" width="17.05" height="10.30" fill="#cc6216"/><rect x="1063.45" y="96.22" width="11.85" height="10.30" fill="#c8461c"/><rect x="1046.40" y="106.52" width="7.80" height="7.58" fill="#cc6a18"/><rect x="1054.20" y="106.52" width="17.34" height="7.58" fill="#c8421c"/><rect x="1071.54" y="106.52" width="3.76" height="7.58" fill="#cc5c18"/><path d="M1046.4,96.22 H1075.3000000000002 M1046.4,106.52 H1075.3000000000002 M1055.36,85.50 V96.22 M1073.57,85.50 V96.22 M1063.45,96.22 V106.52 M1054.20,106.52 V114.10 M1071.54,106.52 V114.10 " stroke="#8a3a12" stroke-width="1.0" fill="none"/><rect x="1046.4" y="85.5" width="28.9" height="28.6" fill="url(#gBrickOv)"/><rect x="1046.7" y="85.8" width="28.299999999999997" height="28.0" fill="none" stroke="#8a3a12" stroke-width="0.6" opacity="0.8"/>
<path d="M1068,110.8 h10 l-5.0,6.2z" fill="#a8a8a8"/>
<path d="M1511.70,99.60 L1509.09,89.12 M1511.70,99.60 L1517.26,90.34 M1511.70,99.60 L1522.18,96.99 M1511.70,99.60 L1520.96,105.16 M1511.70,99.60 L1514.31,110.08 M1511.70,99.60 L1506.14,108.86 M1511.70,99.60 L1501.22,102.21 M1511.70,99.60 L1502.44,94.04 " stroke="#1e1e1e" stroke-width="5.0" stroke-linecap="round" fill="none" opacity="0.55" transform="translate(0.9,1)"/><path d="M1511.70,99.60 L1509.09,89.12 M1511.70,99.60 L1517.26,90.34 M1511.70,99.60 L1522.18,96.99 M1511.70,99.60 L1520.96,105.16 M1511.70,99.60 L1514.31,110.08 M1511.70,99.60 L1506.14,108.86 M1511.70,99.60 L1501.22,102.21 M1511.70,99.60 L1502.44,94.04 " stroke="#e6e6e6" stroke-width="5.0" stroke-linecap="round" fill="none"/><circle cx="1511.7" cy="99.6" r="6.65" fill="#e6e6e6"/><circle cx="1511.7" cy="99.6" r="3.5" fill="#303030"/>
<path d="M1519.2,111 h10 l-5.0,6z" fill="#9a9a9a"/>
<path d="M1554.6,96.8 L1562.8,89.8" stroke="#dcdcdc" stroke-width="3.1" stroke-linecap="round"/><path d="M1537.2,104.6 Q1545,95.4 1557,97 Q1557.4,108.6 1546.5,111.4 Q1539,112.4 1537.2,104.6Z" fill="#c4c4c4"/><path d="M1538.2,104.4 Q1545.6,96.8 1556,97.8 Q1553,104.8 1543.6,106.6 Q1539.6,107 1538.2,104.4Z" fill="#6c7070"/><path d="M1538.2,105.8 Q1541,111.4 1547,110.6" stroke="#f0f0f0" stroke-width="1" fill="none"/>
<path d="M1558,111 h10 l-5.0,6z" fill="#9a9a9a"/>
<path d="M1593.6,103.9 L1601.6,111.1" stroke="#222" stroke-width="4.2" stroke-linecap="round" opacity="0.5" transform="translate(0.8,0.8)"/><path d="M1593.6,103.9 L1601.6,111.1" stroke="#e4e4e4" stroke-width="3" stroke-linecap="round"/><circle cx="1587.0" cy="97.5" r="8.8" fill="url(#gLens)" stroke="#e8e8e8" stroke-width="3.1"/>
<circle cx="1629" cy="98.3" r="11.6" fill="url(#gInfo)" stroke="#e6e6e6" stroke-width="1.7"/>
<circle cx="1668" cy="98.3" r="11.6" fill="url(#gInfo)" stroke="#e6e6e6" stroke-width="1.7"/>
<path d="M1654.80,142.00 L1652.51,132.83 M1654.80,142.00 L1659.67,133.90 M1654.80,142.00 L1663.97,139.71 M1654.80,142.00 L1662.90,146.87 M1654.80,142.00 L1657.09,151.17 M1654.80,142.00 L1649.93,150.10 M1654.80,142.00 L1645.63,144.29 M1654.80,142.00 L1646.70,137.13 " stroke="#1e1e1e" stroke-width="4.3" stroke-linecap="round" fill="none" opacity="0.55" transform="translate(0.9,1)"/><path d="M1654.80,142.00 L1652.51,132.83 M1654.80,142.00 L1659.67,133.90 M1654.80,142.00 L1663.97,139.71 M1654.80,142.00 L1662.90,146.87 M1654.80,142.00 L1657.09,151.17 M1654.80,142.00 L1649.93,150.10 M1654.80,142.00 L1645.63,144.29 M1654.80,142.00 L1646.70,137.13 " stroke="#e6e6e6" stroke-width="4.3" stroke-linecap="round" fill="none"/><circle cx="1654.8" cy="142" r="5.80" fill="#e6e6e6"/><circle cx="1654.8" cy="142" r="3.2" fill="#303030"/>
<path d="M1654.80,181.00 L1652.51,171.83 M1654.80,181.00 L1659.67,172.90 M1654.80,181.00 L1663.97,178.71 M1654.80,181.00 L1662.90,185.87 M1654.80,181.00 L1657.09,190.17 M1654.80,181.00 L1649.93,189.10 M1654.80,181.00 L1645.63,183.29 M1654.80,181.00 L1646.70,176.13 " stroke="#1e1e1e" stroke-width="4.3" stroke-linecap="round" fill="none" opacity="0.55" transform="translate(0.9,1)"/><path d="M1654.80,181.00 L1652.51,171.83 M1654.80,181.00 L1659.67,172.90 M1654.80,181.00 L1663.97,178.71 M1654.80,181.00 L1662.90,185.87 M1654.80,181.00 L1657.09,190.17 M1654.80,181.00 L1649.93,189.10 M1654.80,181.00 L1645.63,183.29 M1654.80,181.00 L1646.70,176.13 " stroke="#e6e6e6" stroke-width="4.3" stroke-linecap="round" fill="none"/><circle cx="1654.8" cy="181" r="5.80" fill="#e6e6e6"/><circle cx="1654.8" cy="181" r="3.2" fill="#303030"/>
<path d="M1384.3,140.1 L1388.2,131.7 L1392.1000000000001,140.1Z M1384.3,141.9 L1388.2,149.3 L1392.1000000000001,141.9Z" fill="#9c9c9c"/>
<path d="M1490.8999999999999,179.4 L1494.8,171.0 L1498.7,179.4Z M1490.8999999999999,181.20000000000002 L1494.8,188.60000000000002 L1498.7,181.20000000000002Z" fill="#9c9c9c"/>
<g transform="translate(117.3,251.5)"><circle r="12.2" fill="#f2f2f2"/><path d="M0.0,-11.0 L0.0,-11.0 L0.0,-11.0 L0.0,-11.0 L0.0,-11.0 L0.0,-11.0 L0.0,-11.0 L0.0,-11.0 L0.3,-10.5 L0.5,-9.9 L0.8,-9.3 L1.1,-8.5 L1.3,-7.8 L1.6,-6.9 L1.6,-6.9 L1.1,-6.9 L0.5,-6.8 L0.0,-6.8 L-0.5,-6.8 L-1.1,-6.9 L-1.6,-6.9 L-1.6,-6.9 L-1.3,-7.8 L-1.1,-8.5 L-0.8,-9.3 L-0.5,-9.9 L-0.3,-10.5 L0.0,-11.0Z M0.0,-11.0 L0.0,-11.0 L0.0,-11.0 L0.0,-11.0 L0.0,-11.0 L0.0,-11.0 L0.0,-11.0 L0.0,-11.0 L1.0,-10.8 L2.0,-10.6 L3.0,-10.2 L4.0,-9.8 L5.0,-9.4 L5.9,-8.8 L5.9,-8.8 L5.7,-8.6 L5.5,-8.4 L5.3,-8.2 L5.0,-8.0 L4.7,-7.8 L4.3,-7.6 L4.3,-7.6 L3.6,-8.3 L3.0,-9.0 L2.2,-9.6 L1.5,-10.1 L0.8,-10.6 L0.0,-11.0Z M0.0,-11.0 L0.0,-11.0 L0.0,-11.0 L0.0,-11.0 L0.0,-11.0 L0.0,-11.0 L0.0,-11.0 L0.0,-11.0 L0.8,-11.3 L1.5,-11.5 L2.2,-11.6 L3.0,-11.6 L3.6,-11.5 L4.3,-11.4 L4.3,-11.4 L4.7,-11.2 L5.0,-11.0 L5.3,-10.8 L5.5,-10.6 L5.7,-10.4 L5.9,-10.2 L5.9,-10.2 L5.0,-10.5 L4.0,-10.8 L3.0,-10.9 L2.0,-11.0 L1.0,-11.0 L0.0,-11.0Z M0.0,-11.0 L0.0,-11.0 L0.0,-11.0 L0.0,-11.0 L0.0,-11.0 L0.0,-11.0 L0.0,-11.0 L0.0,-11.0 L-0.3,-11.4 L-0.5,-11.7 L-0.8,-11.9 L-1.1,-12.1 L-1.3,-12.1 L-1.6,-12.1 L-1.6,-12.1 L-1.1,-12.2 L-0.5,-12.2 L0.0,-12.2 L0.5,-12.2 L1.1,-12.2 L1.6,-12.1 L1.6,-12.1 L1.3,-12.1 L1.1,-12.1 L0.8,-11.9 L0.5,-11.7 L0.3,-11.4 L0.0,-11.0Z M0.0,-11.0 L0.0,-11.0 L0.0,-11.0 L0.0,-11.0 L0.0,-11.0 L0.0,-11.0 L0.0,-11.0 L0.0,-11.0 L-1.0,-11.0 L-2.0,-11.0 L-3.0,-10.9 L-4.0,-10.8 L-5.0,-10.5 L-5.9,-10.2 L-5.9,-10.2 L-5.7,-10.4 L-5.5,-10.6 L-5.3,-10.8 L-5.0,-11.0 L-4.7,-11.2 L-4.3,-11.4 L-4.3,-11.4 L-3.6,-11.5 L-3.0,-11.6 L-2.2,-11.6 L-1.5,-11.5 L-0.8,-11.3 L0.0,-11.0Z M0.0,-11.0 L0.0,-11.0 L0.0,-11.0 L0.0,-11.0 L0.0,-11.0 L0.0,-11.0 L0.0,-11.0 L0.0,-11.0 L-0.8,-10.6 L-1.5,-10.1 L-2.2,-9.6 L-3.0,-9.0 L-3.6,-8.3 L-4.3,-7.6 L-4.3,-7.6 L-4.7,-7.8 L-5.0,-8.0 L-5.3,-8.2 L-5.5,-8.4 L-5.7,-8.6 L-5.9,-8.8 L-5.9,-8.8 L-5.0,-9.4 L-4.0,-9.8 L-3.0,-10.2 L-2.0,-10.6 L-1.0,-10.8 L0.0,-11.0Z M1.6,-6.9 L2.1,-7.0 L2.6,-7.1 L3.0,-7.2 L3.5,-7.3 L3.9,-7.4 L4.3,-7.6 L4.3,-7.6 L4.9,-6.8 L5.5,-6.0 L6.1,-5.1 L6.6,-4.2 L7.1,-3.2 L7.5,-2.2 L7.5,-2.2 L6.8,-1.9 L6.1,-1.7 L5.3,-1.5 L4.5,-1.3 L3.6,-1.1 L2.7,-1.0 L2.7,-1.0 L2.6,-2.1 L2.4,-3.1 L2.2,-4.1 L2.0,-5.1 L1.8,-6.0 L1.6,-6.9Z M5.9,-8.8 L6.0,-9.0 L6.1,-9.3 L6.1,-9.5 L6.1,-9.7 L6.0,-10.0 L5.9,-10.2 L5.9,-10.2 L6.8,-9.8 L7.6,-9.3 L8.3,-8.7 L9.0,-8.1 L9.7,-7.4 L10.2,-6.7 L10.2,-6.7 L10.4,-6.3 L10.5,-5.9 L10.6,-5.5 L10.5,-5.1 L10.4,-4.7 L10.2,-4.3 L10.2,-4.3 L9.7,-5.2 L9.0,-6.0 L8.3,-6.8 L7.6,-7.5 L6.8,-8.2 L5.9,-8.8Z M4.3,-11.4 L3.9,-11.5 L3.5,-11.7 L3.1,-11.8 L2.6,-11.9 L2.1,-12.0 L1.6,-12.1 L1.6,-12.1 L1.8,-12.1 L2.1,-12.0 L2.3,-12.0 L2.6,-11.9 L2.9,-11.8 L3.2,-11.8 L3.2,-11.8 L4.2,-11.5 L5.1,-11.1 L5.9,-10.7 L6.7,-10.2 L7.3,-9.8 L7.9,-9.3 L7.9,-9.3 L7.3,-9.7 L6.8,-10.2 L6.2,-10.5 L5.6,-10.9 L4.9,-11.2 L4.3,-11.4Z M-1.6,-12.1 L-2.1,-12.0 L-2.6,-11.9 L-3.1,-11.8 L-3.5,-11.7 L-3.9,-11.5 L-4.3,-11.4 L-4.3,-11.4 L-4.9,-11.2 L-5.6,-10.9 L-6.2,-10.5 L-6.8,-10.2 L-7.3,-9.7 L-7.9,-9.3 L-7.9,-9.3 L-7.3,-9.8 L-6.7,-10.2 L-5.9,-10.7 L-5.1,-11.1 L-4.2,-11.5 L-3.2,-11.8 L-3.2,-11.8 L-2.9,-11.8 L-2.6,-11.9 L-2.3,-12.0 L-2.1,-12.0 L-1.8,-12.1 L-1.6,-12.1Z M-5.9,-10.2 L-6.0,-10.0 L-6.1,-9.7 L-6.1,-9.5 L-6.1,-9.3 L-6.0,-9.0 L-5.9,-8.8 L-5.9,-8.8 L-6.8,-8.2 L-7.6,-7.5 L-8.3,-6.8 L-9.0,-6.0 L-9.7,-5.2 L-10.2,-4.3 L-10.2,-4.3 L-10.4,-4.7 L-10.5,-5.1 L-10.6,-5.5 L-10.5,-5.9 L-10.4,-6.3 L-10.2,-6.7 L-10.2,-6.7 L-9.7,-7.4 L-9.0,-8.1 L-8.3,-8.7 L-7.6,-9.3 L-6.8,-9.8 L-5.9,-10.2Z M-4.3,-7.6 L-3.9,-7.4 L-3.5,-7.3 L-3.0,-7.2 L-2.6,-7.1 L-2.1,-7.0 L-1.6,-6.9 L-1.6,-6.9 L-1.8,-6.0 L-2.0,-5.1 L-2.2,-4.1 L-2.4,-3.1 L-2.6,-2.1 L-2.7,-1.0 L-2.7,-1.0 L-3.6,-1.1 L-4.5,-1.3 L-5.3,-1.5 L-6.1,-1.7 L-6.8,-1.9 L-7.5,-2.2 L-7.5,-2.2 L-7.1,-3.2 L-6.6,-4.2 L-6.1,-5.1 L-5.5,-6.0 L-4.9,-6.8 L-4.3,-7.6Z M-2.7,-1.0 L-1.8,-0.9 L-0.9,-0.9 L0.0,-0.9 L0.9,-0.9 L1.8,-0.9 L2.7,-1.0 L2.7,-1.0 L2.9,0.0 L3.0,1.1 L3.0,2.2 L3.1,3.2 L3.1,4.2 L3.2,5.2 L3.2,5.2 L2.1,5.3 L1.1,5.3 L0.0,5.3 L-1.1,5.3 L-2.1,5.3 L-3.2,5.2 L-3.2,5.2 L-3.1,4.2 L-3.1,3.2 L-3.0,2.2 L-3.0,1.1 L-2.9,0.0 L-2.7,-1.0Z M7.5,-2.2 L8.1,-2.5 L8.7,-2.8 L9.1,-3.2 L9.6,-3.5 L9.9,-3.9 L10.2,-4.3 L10.2,-4.3 L10.7,-3.4 L11.1,-2.4 L11.4,-1.5 L11.6,-0.5 L11.7,0.4 L11.8,1.4 L11.8,1.4 L11.5,1.8 L11.1,2.3 L10.6,2.7 L10.0,3.1 L9.3,3.4 L8.6,3.8 L8.6,3.8 L8.6,2.8 L8.5,1.8 L8.3,0.8 L8.1,-0.2 L7.8,-1.2 L7.5,-2.2Z M10.2,-6.7 L9.9,-7.1 L9.6,-7.5 L9.3,-7.9 L8.9,-8.4 L8.4,-8.8 L7.9,-9.3 L7.9,-9.3 L8.5,-8.8 L9.1,-8.2 L9.6,-7.5 L10.2,-6.7 L10.7,-5.9 L11.2,-4.9 L11.2,-4.9 L11.4,-4.2 L11.7,-3.6 L11.8,-3.0 L12.0,-2.4 L12.0,-1.9 L12.1,-1.4 L12.1,-1.4 L12.0,-2.4 L11.7,-3.3 L11.5,-4.2 L11.1,-5.1 L10.7,-5.9 L10.2,-6.7Z M-7.9,-9.3 L-8.4,-8.8 L-8.9,-8.4 L-9.3,-7.9 L-9.6,-7.5 L-9.9,-7.1 L-10.2,-6.7 L-10.2,-6.7 L-10.7,-5.9 L-11.1,-5.1 L-11.5,-4.2 L-11.7,-3.3 L-12.0,-2.4 L-12.1,-1.4 L-12.1,-1.4 L-12.0,-1.9 L-12.0,-2.4 L-11.8,-3.0 L-11.7,-3.6 L-11.4,-4.2 L-11.2,-4.9 L-11.2,-4.9 L-10.7,-5.9 L-10.2,-6.7 L-9.6,-7.5 L-9.1,-8.2 L-8.5,-8.8 L-7.9,-9.3Z M-10.2,-4.3 L-9.9,-3.9 L-9.6,-3.5 L-9.2,-3.2 L-8.7,-2.8 L-8.1,-2.5 L-7.5,-2.2 L-7.5,-2.2 L-7.8,-1.2 L-8.1,-0.2 L-8.3,0.8 L-8.5,1.8 L-8.6,2.8 L-8.6,3.8 L-8.6,3.8 L-9.3,3.4 L-10.0,3.1 L-10.6,2.7 L-11.1,2.3 L-11.5,1.8 L-11.8,1.4 L-11.8,1.4 L-11.7,0.4 L-11.6,-0.5 L-11.4,-1.5 L-11.1,-2.4 L-10.7,-3.4 L-10.2,-4.3Z M3.2,5.2 L4.2,5.0 L5.2,4.8 L6.1,4.6 L7.0,4.4 L7.8,4.1 L8.6,3.8 L8.6,3.8 L8.6,4.7 L8.5,5.6 L8.3,6.5 L8.1,7.3 L7.8,8.1 L7.5,8.8 L7.5,8.8 L6.8,9.0 L6.1,9.3 L5.3,9.5 L4.5,9.7 L3.6,9.8 L2.7,10.0 L2.7,10.0 L2.9,9.3 L3.0,8.6 L3.0,7.8 L3.1,7.0 L3.1,6.1 L3.2,5.2Z M11.8,1.4 L12.0,0.9 L12.2,0.5 L12.2,-0.0 L12.2,-0.5 L12.2,-0.9 L12.1,-1.4 L12.1,-1.4 L12.2,-0.4 L12.2,0.6 L12.1,1.6 L11.9,2.6 L11.6,3.7 L11.2,4.7 L11.2,4.7 L11.1,5.0 L11.0,5.3 L10.8,5.6 L10.6,6.0 L10.4,6.3 L10.2,6.7 L10.2,6.7 L10.7,5.9 L11.1,5.1 L11.4,4.2 L11.6,3.3 L11.7,2.3 L11.8,1.4Z M-12.1,-1.4 L-12.2,-0.9 L-12.2,-0.5 L-12.2,-0.0 L-12.2,0.5 L-12.0,0.9 L-11.8,1.4 L-11.8,1.4 L-11.7,2.3 L-11.6,3.3 L-11.4,4.2 L-11.1,5.1 L-10.7,5.9 L-10.2,6.7 L-10.2,6.7 L-10.4,6.3 L-10.6,6.0 L-10.8,5.6 L-11.0,5.3 L-11.1,5.0 L-11.2,4.7 L-11.2,4.7 L-11.6,3.7 L-11.9,2.6 L-12.1,1.6 L-12.2,0.6 L-12.2,-0.4 L-12.1,-1.4Z M-8.6,3.8 L-7.8,4.1 L-7.0,4.4 L-6.1,4.6 L-5.2,4.8 L-4.2,5.0 L-3.2,5.2 L-3.2,5.2 L-3.1,6.1 L-3.1,7.0 L-3.0,7.8 L-3.0,8.6 L-2.9,9.3 L-2.7,10.0 L-2.7,10.0 L-3.6,9.8 L-4.5,9.7 L-5.3,9.5 L-6.1,9.3 L-6.8,9.0 L-7.5,8.8 L-7.5,8.8 L-7.8,8.1 L-8.1,7.3 L-8.3,6.5 L-8.5,5.6 L-8.6,4.7 L-8.6,3.8Z M-2.7,10.0 L-1.8,10.0 L-0.9,10.1 L0.0,10.1 L0.9,10.1 L1.8,10.0 L2.7,10.0 L2.7,10.0 L2.6,10.5 L2.4,11.0 L2.2,11.4 L2.0,11.7 L1.8,11.9 L1.6,12.1 L1.6,12.1 L1.1,12.1 L0.5,12.2 L0.0,12.2 L-0.5,12.2 L-1.1,12.1 L-1.6,12.1 L-1.6,12.1 L-1.8,11.9 L-2.0,11.7 L-2.2,11.4 L-2.4,11.0 L-2.6,10.5 L-2.7,10.0Z M7.5,8.8 L8.1,8.5 L8.7,8.1 L9.2,7.8 L9.6,7.4 L9.9,7.1 L10.2,6.7 L10.2,6.7 L9.7,7.4 L9.1,8.2 L8.4,8.8 L7.7,9.5 L6.9,10.0 L6.1,10.6 L6.1,10.6 L5.9,10.7 L5.6,10.8 L5.3,11.0 L5.0,11.1 L4.7,11.3 L4.3,11.4 L4.3,11.4 L4.9,11.2 L5.5,10.8 L6.1,10.4 L6.6,9.9 L7.1,9.4 L7.5,8.8Z M-10.2,6.7 L-9.9,7.1 L-9.6,7.4 L-9.2,7.8 L-8.7,8.1 L-8.1,8.5 L-7.5,8.8 L-7.5,8.8 L-7.1,9.4 L-6.6,9.9 L-6.1,10.4 L-5.5,10.8 L-4.9,11.2 L-4.3,11.4 L-4.3,11.4 L-4.7,11.3 L-5.0,11.1 L-5.3,11.0 L-5.6,10.8 L-5.9,10.7 L-6.1,10.6 L-6.1,10.6 L-6.9,10.0 L-7.7,9.5 L-8.4,8.8 L-9.1,8.2 L-9.7,7.4 L-10.2,6.7Z M1.6,12.1 L2.1,12.0 L2.6,11.9 L3.0,11.8 L3.5,11.7 L3.9,11.6 L4.3,11.4 L4.3,11.4 L3.7,11.6 L3.0,11.8 L2.3,12.0 L1.6,12.1 L0.8,12.2 L0.0,12.2 L0.0,12.2 L0.0,12.2 L0.0,12.2 L0.0,12.2 L0.0,12.2 L0.0,12.2 L0.0,12.2 L0.0,12.2 L0.3,12.2 L0.6,12.2 L0.8,12.2 L1.1,12.2 L1.3,12.1 L1.6,12.1Z M-4.3,11.4 L-3.9,11.6 L-3.5,11.7 L-3.0,11.8 L-2.6,11.9 L-2.1,12.0 L-1.6,12.1 L-1.6,12.1 L-1.3,12.1 L-1.1,12.2 L-0.8,12.2 L-0.6,12.2 L-0.3,12.2 L-0.0,12.2 L-0.0,12.2 L-0.0,12.2 L-0.0,12.2 L-0.0,12.2 L-0.0,12.2 L-0.0,12.2 L-0.0,12.2 L-0.0,12.2 L-0.8,12.2 L-1.6,12.1 L-2.3,12.0 L-3.0,11.8 L-3.7,11.6 L-4.3,11.4Z " fill="#0a0a0a"/><circle r="12.2" fill="url(#gShade2)"/><circle r="11.899999999999999" fill="none" stroke="#202020" stroke-width="0.8" opacity="0.8"/></g>
<rect x="323.10" y="239.30" width="7.63" height="9.19" fill="#b63e16"/><rect x="330.73" y="239.30" width="16.97" height="9.19" fill="#c04a16"/><rect x="323.10" y="248.49" width="14.64" height="8.82" fill="#bc5616"/><rect x="337.74" y="248.49" width="9.96" height="8.82" fill="#bc441a"/><rect x="323.10" y="257.31" width="6.27" height="6.49" fill="#b8501a"/><rect x="329.37" y="257.31" width="15.01" height="6.49" fill="#b8401a"/><rect x="344.38" y="257.31" width="3.32" height="6.49" fill="#ac481a"/><path d="M323.1,248.49 H347.70000000000005 M323.1,257.31 H347.70000000000005 M330.73,239.30 V248.49 M337.74,248.49 V257.31 M329.37,257.31 V263.80 M344.38,257.31 V263.80 " stroke="#6e260a" stroke-width="1.1" fill="none"/><rect x="323.1" y="239.3" width="24.6" height="24.5" fill="url(#gBrickOv)"/><rect x="323.40000000000003" y="239.60000000000002" width="24.0" height="23.9" fill="none" stroke="#6e260a" stroke-width="0.6" opacity="0.8"/>
<g transform="translate(569.6,252.7)"><ellipse cx="3" cy="11.1" rx="8" ry="1.8" fill="#9a9a9a" opacity="0.7"/><g clip-path="url(#cBall2)"><circle cx="17.6" cy="38.1" r="54.0" fill="#c8a272"/><circle cx="17.6" cy="38.1" r="49.6" fill="#f4f4f4"/><circle cx="17.6" cy="38.1" r="47.4" fill="#3e5e9e"/><circle cx="17.6" cy="38.1" r="43.6" fill="#eef4f8"/><circle cx="17.6" cy="38.1" r="40.1" fill="#cc3434"/><circle cx="17.6" cy="38.1" r="36.6" fill="#d8ecd8"/><circle cx="17.6" cy="38.1" r="35.3" fill="#c22e2e"/><circle cx="17.6" cy="38.1" r="33.4" fill="#2c7c40"/></g><circle r="11.5" fill="url(#gShade)"/><circle r="11.2" fill="none" stroke="#6a4a3a" stroke-width="0.6" opacity="0.7"/></g>
<g transform="translate(775,241)"><path d="M3.2,5.4 L10.6,23.6" stroke="#7a7a7a" stroke-width="1.6" stroke-linecap="round"/><path d="M2.6,4.4 Q8,-1.2 13.4,2.8 Q18,6 23,2.2 L25.2,12.4 Q20,17 15,13.6 Q10,10.4 6.4,14.4 Z" fill="#f2f2f2" stroke="#2a2a2a" stroke-width="0.7"/><rect x="4.2" y="3.6" width="2.9" height="2.9" fill="#161616" transform="rotate(-18 5.6 5.0)"/><rect x="10.2" y="1.6" width="2.9" height="2.9" fill="#161616" transform="rotate(-18 11.6 3.0)"/><rect x="15.8" y="4.8" width="2.9" height="2.9" fill="#161616" transform="rotate(-18 17.2 6.199999999999999)"/><rect x="21" y="3.4" width="2.9" height="2.9" fill="#161616" transform="rotate(-18 22.4 4.8)"/><rect x="7.6" y="5.8" width="2.9" height="2.9" fill="#161616" transform="rotate(-18 9.0 7.199999999999999)"/><rect x="13" y="5.4" width="2.9" height="2.9" fill="#161616" transform="rotate(-18 14.4 6.800000000000001)"/><rect x="18.6" y="7" width="2.9" height="2.9" fill="#161616" transform="rotate(-18 20.0 8.4)"/><rect x="5.6" y="9" width="2.9" height="2.9" fill="#161616" transform="rotate(-18 7.0 10.4)"/><rect x="11" y="8" width="2.9" height="2.9" fill="#161616" transform="rotate(-18 12.4 9.4)"/><rect x="16.2" y="9.8" width="2.9" height="2.9" fill="#161616" transform="rotate(-18 17.599999999999998 11.200000000000001)"/><rect x="21.8" y="8.6" width="2.9" height="2.9" fill="#161616" transform="rotate(-18 23.2 10.0)"/><rect x="8.6" y="11" width="2.9" height="2.9" fill="#161616" transform="rotate(-18 10.0 12.4)"/><rect x="14" y="11.2" width="2.9" height="2.9" fill="#161616" transform="rotate(-18 15.4 12.6)"/><rect x="19.4" y="12.6" width="2.9" height="2.9" fill="#161616" transform="rotate(-18 20.799999999999997 14.0)"/></g>
</svg>
<span class="t" style="left:5.64px;top:5.0px;font-size:16px;color:#c8c8c8;transform:scaleX(0.9664);font-style:italic">/mat/octane_vopnet1</span>
<span class="t" style="left:199.04px;top:5.1px;font-size:16px;color:#cfcfcf;transform:scaleX(0.9395);">Take List</span>
<span class="t" style="left:312.04px;top:5.1px;font-size:16px;color:#cfcfcf;transform:scaleX(0.9567);">Performance Monitor</span>
<span class="t" style="left:118.79px;top:43.0px;font-size:17.4px;color:#dcdcdc;transform:scaleX(1.0420);">mat</span>
<span class="t" style="left:204.69px;top:43.0px;font-size:17.4px;color:#dcdcdc;transform:scaleX(0.9793);">octane_vopnet1</span>
<span class="t" style="left:23.79px;top:91.6px;font-size:17.4px;color:#d0d0d0;transform:scaleX(1.0635);">Add</span>
<span class="t" style="left:80.39px;top:91.6px;font-size:17.4px;color:#d0d0d0;transform:scaleX(1.0984);">Edit</span>
<span class="t" style="left:136.19px;top:91.6px;font-size:17.4px;color:#d0d0d0;transform:scaleX(1.0006);">Go</span>
<span class="t" style="left:182.09px;top:91.6px;font-size:17.4px;color:#d0d0d0;transform:scaleX(1.0649);">View</span>
<span class="t" style="left:244.89px;top:91.6px;font-size:17.4px;color:#d0d0d0;transform:scaleX(1.1036);">Tools</span>
<span class="t" style="left:312.69px;top:91.6px;font-size:17.4px;color:#d0d0d0;transform:scaleX(1.0881);">Layout</span>
<span class="t" style="left:388.89px;top:91.6px;font-size:17.4px;color:#d0d0d0;transform:scaleX(1.0524);">Octane</span>
<span class="t" style="left:463.39px;top:91.6px;font-size:17.4px;color:#d0d0d0;transform:scaleX(1.0238);">Labs</span>
<span class="t" style="left:520.69px;top:91.6px;font-size:17.4px;color:#d0d0d0;transform:scaleX(1.0737);">Help</span>
<span class="t" style="left:820.52px;top:144.7px;font-size:36.5px;color:#4f4f4f;transform:scaleX(0.9341);font-weight:bold">VEX Builder</span>
<span class="t" style="left:98.58px;top:209.6px;font-size:20.6px;color:#d4d4d4;transform:scaleX(0.9605);">Color_RGB1</span>
<span class="t" style="left:317.68px;top:210.5px;font-size:20.6px;color:#d4d4d4;transform:scaleX(1.0067);">Decal_texture1</span>
<span class="t" style="left:551.48px;top:211.7px;font-size:20.6px;color:#d4d4d4;transform:scaleX(0.9909);">Material_Glossy1</span>
<span class="t" style="left:769.08px;top:192.6px;font-size:17.6px;color:#6c6c6c;transform:scaleX(1.0713);">OUT Material</span>
<span class="t" style="left:768.98px;top:211.8px;font-size:20.6px;color:#d4d4d4;transform:scaleX(1.0154);">octane_Logo</span>
<span class="t" style="left:178.00px;top:271.9px;font-size:11.4px;color:#63b676;transform:scaleX(0.9236);">NT_TEX_RGB</span>
<span class="t" style="left:327.10px;top:271.9px;font-size:11.4px;color:#63b676;transform:scaleX(1.0537);">texture</span>
<span class="t" style="left:399.00px;top:271.9px;font-size:11.4px;color:#63b676;transform:scaleX(0.9729);">NT_TEX_D...</span>
<span class="t" style="left:327.10px;top:286.0px;font-size:11.4px;color:#4aa0e2;transform:scaleX(1.0448);">decalTextureIndex</span>
<span class="t" style="left:327.10px;top:300.8px;font-size:11.4px;color:#4aa0e2;transform:scaleX(1.0377);">blendMode</span>
<span class="t" style="left:637.80px;top:272.7px;font-size:11.4px;color:#e6da22;transform:scaleX(1.0091);">NT_MAT_...</span>
<span class="t" style="left:779.10px;top:272.7px;font-size:11.4px;color:#e6da22;transform:scaleX(1.0711);">material</span>
<span class="t" style="left:779.10px;top:287.5px;font-size:11.4px;color:#b4b4b4;transform:scaleX(1.0687);">medium</span>
<span class="t" style="left:880.60px;top:272.7px;font-size:11.4px;color:#eeb092;transform:scaleX(1.0274);">shader</span>
<span class="t" style="left:560.90px;top:272.6px;font-size:11.4px;color:#63b676;transform:scaleX(1.0701);">diffuse</span>
<span class="t" style="left:560.90px;top:287.6px;font-size:11.4px;color:#63b676;transform:scaleX(1.0403);">specular</span>
<span class="t" style="left:560.90px;top:302.6px;font-size:11.4px;color:#4aa0e2;transform:scaleX(1.0746);">diffuseBrdf</span>
<span class="t" style="left:560.90px;top:316.6px;font-size:11.4px;color:#4aa0e2;transform:scaleX(1.1353);">brdf</span>
<span class="t" style="left:560.90px;top:331.6px;font-size:11.4px;color:#63b676;transform:scaleX(1.0262);">roughness</span>
<span class="t" style="left:560.90px;top:346.6px;font-size:11.4px;color:#5cc0c0;transform:scaleX(1.0806);">anisotropy</span>
<span class="t" style="left:560.90px;top:361.6px;font-size:11.4px;color:#63b676;transform:scaleX(1.1210);">rotation</span>
<span class="t" style="left:560.90px;top:376.6px;font-size:11.4px;color:#5cc0c0;transform:scaleX(1.0274);">spread</span>
<span class="t" style="left:560.90px;top:390.6px;font-size:11.4px;color:#63b676;transform:scaleX(1.1351);">filmwidth</span>
<span class="t" style="left:560.90px;top:405.6px;font-size:11.4px;color:#5cc0c0;transform:scaleX(1.0967);">filmindex</span>
<span class="t" style="left:560.90px;top:420.6px;font-size:11.4px;color:#63b676;transform:scaleX(1.0081);">sheen</span>
<span class="t" style="left:560.90px;top:435.6px;font-size:11.4px;color:#63b676;transform:scaleX(1.0014);">sheenRoughness</span>
<span class="t" style="left:560.90px;top:449.6px;font-size:11.4px;color:#5cc0c0;transform:scaleX(1.0574);">index</span>
<span class="t" style="left:560.90px;top:464.6px;font-size:11.4px;color:#4aa0e2;transform:scaleX(1.0040);">hasCaustics</span>
<span class="t" style="left:560.90px;top:479.6px;font-size:11.4px;color:#63b676;transform:scaleX(1.0888);">opacity</span>
<span class="t" style="left:560.90px;top:494.6px;font-size:11.4px;color:#63b676;transform:scaleX(1.0982);">bump</span>
<span class="t" style="left:560.90px;top:508.6px;font-size:11.4px;color:#5cc0c0;transform:scaleX(1.0794);">bumpHeight</span>
<span class="t" style="left:560.90px;top:523.6px;font-size:11.4px;color:#63b676;transform:scaleX(1.0996);">normal</span>
<span class="t" style="left:560.90px;top:538.6px;font-size:11.4px;color:#aeb8dc;transform:scaleX(1.0622);">displacement</span>
<span class="t" style="left:560.90px;top:553.6px;font-size:11.4px;color:#4aa0e2;transform:scaleX(1.0787);">smooth</span>
<span class="t" style="left:560.90px;top:567.6px;font-size:11.4px;color:#4aa0e2;transform:scaleX(1.0685);">smoothShadowTerminator</span>
<span class="t" style="left:560.90px;top:582.6px;font-size:11.4px;color:#60dca0;transform:scaleX(1.0303);">roundEdges</span>
<span class="t" style="left:560.90px;top:597.6px;font-size:11.4px;color:#4aa0e2;transform:scaleX(1.1495);">priority</span>
<span class="t" style="left:560.90px;top:612.6px;font-size:11.4px;color:#4aa0e2;transform:scaleX(1.0436);">customAov</span>
<span class="t" style="left:560.90px;top:626.6px;font-size:11.4px;color:#4aa0e2;transform:scaleX(1.0305);">customAovChannel</span>
<span class="t" style="left:560.90px;top:641.6px;font-size:11.4px;color:#e4e4e4;transform:scaleX(1.0848);">layer</span>
<span class="t" style="left:1049.84px;top:5.2px;font-size:16px;color:#c8c8c8;transform:scaleX(0.9173);font-style:italic">Decal_texture1</span>
<span class="t" style="left:1161.89px;top:43.0px;font-size:17.4px;color:#dcdcdc;transform:scaleX(1.0420);">mat</span>
<span class="t" style="left:1247.89px;top:43.0px;font-size:17.4px;color:#dcdcdc;transform:scaleX(0.9793);">octane_vopnet1</span>
<span class="t" style="left:1080.44px;top:93.0px;font-size:16px;color:#dedede;transform:scaleX(1.0430);font-weight:bold">Decal texture</span>
<span class="t" style="left:1197.60px;top:92.7px;font-size:16.6px;color:#f0f0f0;transform:scaleX(1.0552);font-family:'DejaVu Sans Mono', 'Liberation Mono', monospace;">Decal_texture1</span>
<span class="t" style="left:1110.09px;top:134.0px;font-size:17.4px;color:#cccccc;transform:scaleX(0.9593);">Decal texture index</span>
<span class="t" style="left:1162.19px;top:172.9px;font-size:17.4px;color:#cccccc;transform:scaleX(0.9667);">Blend mode</span>
<span class="t" style="left:1292.79px;top:134.0px;font-size:17.4px;color:#cccccc;transform:scaleX(0.9619);">Texture 1</span>
<span class="t" style="left:1291.79px;top:172.9px;font-size:17.4px;color:#cccccc;transform:scaleX(1.0013);">Normal</span>
<span class="t" style="left:1625.10px;top:89.0px;font-size:20px;color:#f0f0f0;transform:scaleX(1.2584);font-family:'Liberation Serif', serif;font-weight:bold;font-style:italic">i</span>
<span class="t" style="left:1663.39px;top:90.7px;font-size:17.5px;color:#f0f0f0;transform:scaleX(0.8993);font-weight:bold">?</span>
</body></html>
